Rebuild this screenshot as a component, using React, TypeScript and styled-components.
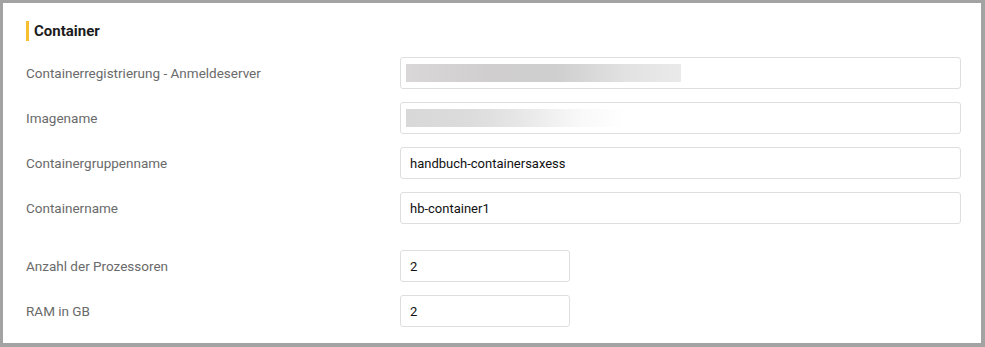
import React from 'react';
import styled, { createGlobalStyle } from 'styled-components';

const GlobalStyle = createGlobalStyle`
  html, body {
    margin: 0;
    padding: 0;
    background: #ffffff;
  }
  body {
    font-family: Roboto, "Liberation Sans", Arial, sans-serif;
  }
`;

const Card = styled.section`
  box-sizing: border-box;
  width: 985px;
  height: 347px;
  border-style: solid;
  border-color: #a3a3a3;
  border-width: 3px 4px 4px 3px;
  background: #ffffff;
  padding: 18px 20px 0 23px;
`;

const SectionTitle = styled.h2`
  margin: 0;
  height: 20px;
  display: flex;
  align-items: center;
  border-left: 3px solid #f7bf2f;
  padding-left: 5px;
  font-size: 15px;
  font-weight: 700;
  color: #1c1c1c;
`;

const Form = styled.div`
  margin-top: 16px;
  display: flex;
  flex-direction: column;
  gap: 26px;
`;

const Group = styled.div`
  display: flex;
  flex-direction: column;
  gap: 13px;
`;

const Row = styled.div`
  display: grid;
  grid-template-columns: 374px 1fr;
  align-items: center;
`;

const Label = styled.label`
  font-size: 13.5px;
  color: #6a6a6a;
`;

const Field = styled.div<{ $width?: number }>`
  box-sizing: border-box;
  height: 32px;
  width: ${({ $width }) => ($width ? `${$width}px` : '100%')};
  border: 1px solid #dedede;
  border-radius: 3px;
  background: #fff;
  display: flex;
  align-items: center;
  padding: 0 9px;
  font-size: 13px;
  color: #111;
`;

const Redacted = styled.div<{ $fade: string }>`
  height: 18px;
  margin-left: -4px;
  background: ${({ $fade }) => $fade};
`;

const fadeA = 'linear-gradient(90deg, #d9d7d7 0%, #d0cece 30%, #cfcfcf 55%, #e1e2e1 80%, #e9eae9 100%)';
const fadeB = 'linear-gradient(90deg, #d8d8d9 0%, #dcdcdd 30%, #e6e6e6 50%, #f9f9f9 80%, #ffffff 100%)';

const App: React.FC = () => {
  return (
    <>
      <GlobalStyle />
      <Card>
        <SectionTitle>Container</SectionTitle>
        <Form>
          <Group>
            <Row>
              <Label>Containerregistrierung - Anmeldeserver</Label>
              <Field>
                <Redacted $fade={fadeA} style={{ width: 275 }} />
              </Field>
            </Row>
            <Row>
              <Label>Imagename</Label>
              <Field>
                <Redacted $fade={fadeB} style={{ width: 220 }} />
              </Field>
            </Row>
            <Row>
              <Label>Containergruppenname</Label>
              <Field>handbuch-containersaxess</Field>
            </Row>
            <Row>
              <Label>Containername</Label>
              <Field>hb-container1</Field>
            </Row>
          </Group>
          <Group>
            <Row>
              <Label>Anzahl der Prozessoren</Label>
              <Field $width={170}>2</Field>
            </Row>
            <Row>
              <Label>RAM in GB</Label>
              <Field $width={170}>2</Field>
            </Row>
          </Group>
        </Form>
      </Card>
    </>
  );
};

export default App;
